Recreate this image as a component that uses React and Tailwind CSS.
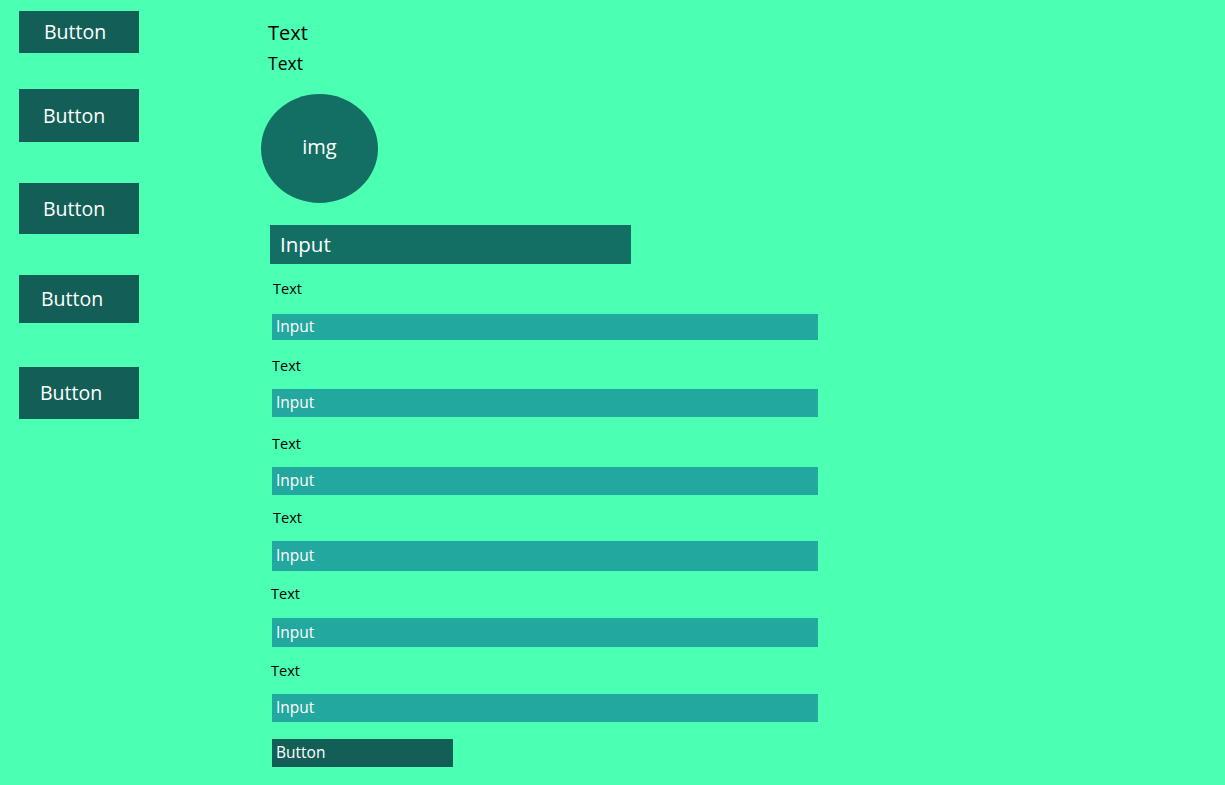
const FONT = { fontFamily: '"Open Sans", "Noto Sans", sans-serif' };

const SIDE_BUTTONS = [
  { mt: 'mt-[11px]', h: 'h-[42px]', pl: 'pl-[25px]' },
  { mt: 'mt-[36px]', h: 'h-[53px]', pl: 'pl-[24px]' },
  { mt: 'mt-[41px]', h: 'h-[51px]', pl: 'pl-[24px]' },
  { mt: 'mt-[41px]', h: 'h-[48px]', pl: 'pl-[22px]' },
  { mt: 'mt-[44px]', h: 'h-[52px]', pl: 'pl-[21px]' },
];

// label / input rows in the form
const ROWS = [
  { labelMt: 'mt-[15px]', labelMl: 'ml-[12px]', inputMt: 'mt-[15px]', inputH: 'h-[26px]' },
  { labelMt: 'mt-[16px]', labelMl: 'ml-[11px]', inputMt: 'mt-[13px]', inputH: 'h-[28px]' },
  { labelMt: 'mt-[17px]', labelMl: 'ml-[11px]', inputMt: 'mt-[13px]', inputH: 'h-[28px]' },
  { labelMt: 'mt-[13px]', labelMl: 'ml-[12px]', inputMt: 'mt-[13px]', inputH: 'h-[30px]' },
  { labelMt: 'mt-[13px]', labelMl: 'ml-[10px]', inputMt: 'mt-[14px]', inputH: 'h-[29px]' },
  { labelMt: 'mt-[14px]', labelMl: 'ml-[10px]', inputMt: 'mt-[13px]', inputH: 'h-[28px]' },
];

export default function App() {
  return (
    <div className="w-full h-[785px] bg-[#4bffb3] flex overflow-hidden" style={FONT}>
      {/* SIDEBAR BUTTONS */}
      <div className="w-[261px] pl-[19px] flex flex-col shrink-0">
        {SIDE_BUTTONS.map((b, i) => (
          <button
            key={i}
            className={`${b.mt} ${b.h} ${b.pl} w-[120px] bg-[#135f57] text-white text-[19.5px] leading-none flex items-center justify-start`}
          >
            Button
          </button>
        ))}
      </div>

      {/* MAIN */}
      <div className="flex flex-col">
        <div className="mt-[19px] ml-[7px] text-[20px] leading-[28px] text-black">Text</div>
        <div className="mt-[4px] ml-[7px] text-[17.5px] leading-[24px] text-black">Text</div>

        <div className="mt-[19px] w-[117px] h-[109px] rounded-[50%] bg-[#136f64] text-white text-[20px] flex items-center justify-center">
          <span className="-mt-[3px]">img</span>
        </div>

        <div className="mt-[22px] ml-[9px] w-[361px] h-[39px] bg-[#136f64] text-white text-[20.5px] leading-none flex items-center pl-[10px]">
          Input
        </div>

        {ROWS.map((r, i) => (
          <div key={i} className="flex flex-col">
            <div className={`${r.labelMt} ${r.labelMl} text-[14.5px] leading-[20px] text-black`}>Text</div>
            <div className={`${r.inputMt} ${r.inputH} ml-[11px] w-[546px] bg-[#22a89e] text-white text-[15.5px] leading-none flex items-center pl-[4px]`}>
              Input
            </div>
          </div>
        ))}

        <button className="mt-[17px] ml-[11px] w-[181px] h-[28px] bg-[#135f57] text-white text-[15.5px] leading-none flex items-center justify-start pl-[4px]">
          Button
        </button>
      </div>
    </div>
  );
}
